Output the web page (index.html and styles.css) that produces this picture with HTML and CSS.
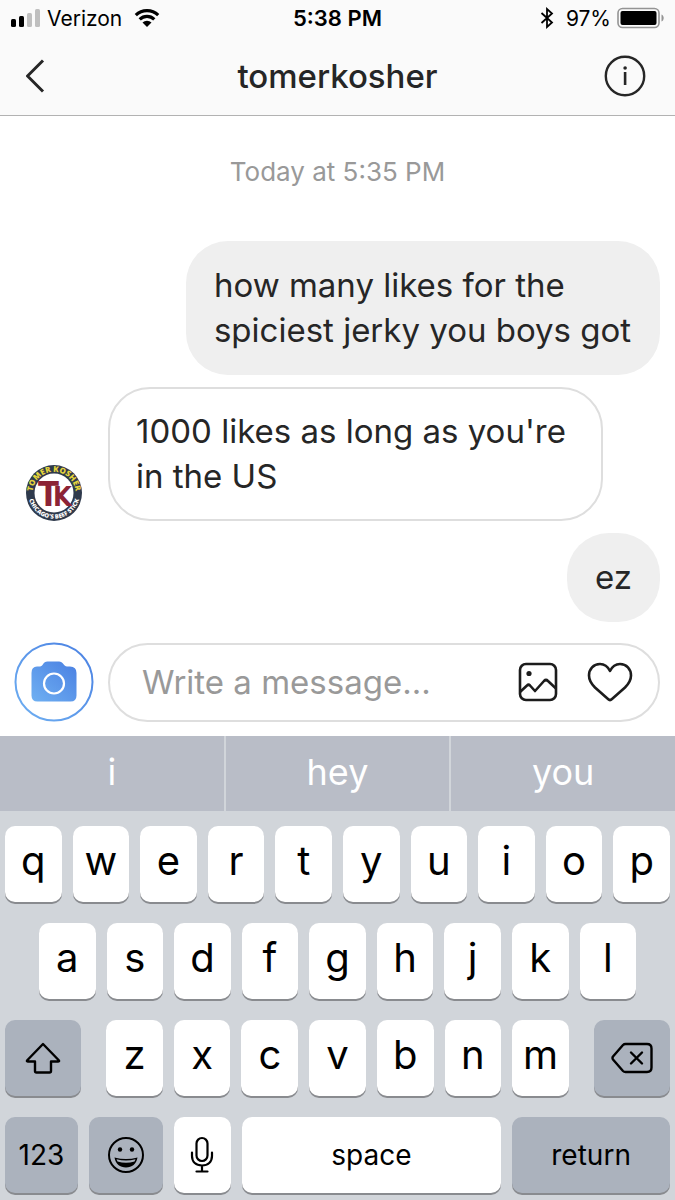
FILE: index.html
```
<!DOCTYPE html>
<html lang="en">
<head>
  <meta charset="UTF-8">
  <meta name="viewport" content="width=device-width, initial-scale=1.0">
  <title>tomerkosher</title>
  <link rel="stylesheet" href="styles.css">
</head>
<body>
  <!-- Status bar + navigation -->
  <header class="header">
    <div class="status">
      <div class="status-left">
        <svg class="signal" width="31" height="20" viewBox="0 0 31 20">
          <rect x="1" y="11" width="5" height="8" rx="1.5"/>
          <rect x="9" y="8" width="5" height="11" rx="1.5"/>
          <rect x="17" y="5" width="5" height="14" rx="1.5" fill="#bfbfbf"/>
          <rect x="25" y="1" width="5" height="18" rx="1.5" fill="#bfbfbf"/>
        </svg>
        <span>Verizon</span>
        <svg class="wifi" width="26" height="18" viewBox="0 0 26 18">
          <path d="M1.8 6.2A16 16 0 0 1 24.2 6.2M5.7 10.3A10.5 10.5 0 0 1 20.3 10.3" fill="none" stroke="#000" stroke-width="3.2"/>
          <path d="M8.5 13.6A6.5 6.5 0 0 1 17.5 13.6L13 18Z"/>
        </svg>
      </div>
      <span class="status-time">5:38 PM</span>
      <div class="status-right">
        <svg class="bluetooth" width="14" height="22" viewBox="0 0 14 22">
          <path d="M1.5 6 12 15.5 7 20V2L12 6.5 1.5 16" fill="none" stroke="#000" stroke-width="1.8"/>
        </svg>
        <span>97%</span>
        <svg width="48" height="22" viewBox="0 0 48 22">
          <rect x="1" y="1.5" width="41" height="19" rx="4.5" fill="none" stroke="#949494" stroke-width="1.6"/>
          <rect x="3.5" y="4" width="36" height="14" rx="2"/>
          <path d="M44.5 7.5C47.4 8.5 47.4 13.5 44.5 14.5Z" fill="#949494"/>
        </svg>
      </div>
    </div>
    <nav class="nav">
      <button class="icon-btn" type="button" aria-label="Back">
        <svg width="20" height="36" viewBox="0 0 20 36">
          <path d="M17 2.5 1.5 18 17 33.5" fill="none" stroke="#262626" stroke-width="3"/>
        </svg>
      </button>
      <h1 class="nav-title">tomerkosher</h1>
      <button class="icon-btn" type="button" aria-label="Info">
        <svg width="45" height="42" viewBox="0 0 45 42">
          <circle cx="21" cy="21" r="19.2" fill="none" stroke="#262626" stroke-width="2.4"/>
          <rect x="19.8" y="17" width="2.6" height="13" fill="#262626"/>
          <circle cx="21.1" cy="13" r="1.8" fill="#262626"/>
        </svg>
      </button>
    </nav>
  </header>

  <!-- Messages -->
  <main class="chat">
    <p class="timestamp">Today at 5:35 PM</p>
    <div class="bubble sent">how many likes for the spiciest jerky you boys got</div>
    <div class="received-row">
      <svg class="avatar" width="56" height="56" viewBox="0 0 56 56">
        <defs>
          <path id="arcTop" d="M6.8 32A21.5 21.5 0 1 1 49.2 32"/>
          <path id="arcBottom" d="M2.5 24A25.8 25.8 0 1 0 53.5 24"/>
        </defs>
        <circle cx="28" cy="28" r="28" fill="#2f3a4c"/>
        <circle cx="28" cy="28" r="19.5" fill="#fff"/>
        <text class="logo-ring logo-yellow" text-anchor="middle"><textPath href="#arcTop" startOffset="50%">TOMER KOSHER</textPath></text>
        <text class="logo-ring logo-white" text-anchor="middle"><textPath href="#arcBottom" startOffset="50%">CHICAGO'S BEEF STICK</textPath></text>
        <text class="logo-tk" x="12" y="41">T<tspan class="logo-k" dx="-6">K</tspan></text>
      </svg>
      <div class="bubble received">1000 likes as long as you're in the US</div>
    </div>
    <div class="bubble sent">ez</div>
  </main>

  <!-- Composer -->
  <form class="composer">
    <button class="camera-btn" type="button" aria-label="Camera">
      <svg width="80" height="80" viewBox="0 0 80 80">
        <defs>
          <linearGradient id="blue" x1="0" y1="1" x2="1" y2="0">
            <stop offset="0" stop-color="#6fb0f2"/>
            <stop offset="1" stop-color="#4a80e2"/>
          </linearGradient>
        </defs>
        <circle cx="40" cy="40" r="38.5" fill="none" stroke="url(#blue)" stroke-width="2"/>
        <path d="M23 24.5H26C29 24.5 29 19.5 33.5 19.5H45C49 19.5 50 24.5 53 24.5H56Q62.5 24.5 62.5 31V53.5Q62.5 59.5 56.5 59.5H23.5Q17.5 59.5 17.5 53.5V31Q17.5 24.5 23 24.5Z" fill="url(#blue)"/>
        <circle cx="40" cy="41.5" r="10" fill="none" stroke="#fff" stroke-width="2.2"/>
      </svg>
    </button>
    <div class="message-box">
      <input class="message-input" type="text" placeholder="Write a message..." aria-label="Message">
      <button class="icon-btn" type="button" aria-label="Photo">
        <svg width="40" height="40" viewBox="0 0 40 40" fill="none" stroke="#1c1c1c" stroke-width="2.6" stroke-linejoin="round">
          <rect x="2" y="2" width="36" height="36" rx="6"/>
          <path d="M2 30 9 23.5Q10.5 22 12 23.5L17 29 26 19Q28 17 30 19L38 26.5"/>
          <circle cx="11" cy="11.5" r="2.6" fill="#1c1c1c" stroke="none"/>
        </svg>
      </button>
      <button class="icon-btn" type="button" aria-label="Like">
        <svg width="46" height="40" viewBox="0 0 46 40" fill="none" stroke="#1c1c1c" stroke-width="2.6" stroke-linejoin="round">
          <path d="M23 9C20.5 4 17 2 13 2C6.5 2 2 7 2 13.5C2 19 4.5 22 8 25.5L21 37Q23 39 25 37L38 25.5C41.5 22 44 19 44 13.5C44 7 39.5 2 33 2C29 2 25.5 4 23 9Z"/>
        </svg>
      </button>
    </div>
  </form>

  <!-- Keyboard -->
  <section class="keyboard">
    <div class="suggestions">
      <button class="suggestion" type="button">i</button>
      <button class="suggestion" type="button">hey</button>
      <button class="suggestion" type="button">you</button>
    </div>
    <div class="keys">
      <div class="row">
        <button class="key" type="button">q</button>
        <button class="key" type="button">w</button>
        <button class="key" type="button">e</button>
        <button class="key" type="button">r</button>
        <button class="key" type="button">t</button>
        <button class="key" type="button">y</button>
        <button class="key" type="button">u</button>
        <button class="key" type="button">i</button>
        <button class="key" type="button">o</button>
        <button class="key" type="button">p</button>
      </div>
      <div class="row row-home">
        <button class="key" type="button">a</button>
        <button class="key" type="button">s</button>
        <button class="key" type="button">d</button>
        <button class="key" type="button">f</button>
        <button class="key" type="button">g</button>
        <button class="key" type="button">h</button>
        <button class="key" type="button">j</button>
        <button class="key" type="button">k</button>
        <button class="key" type="button">l</button>
      </div>
      <div class="row-shift">
        <button class="key key-dark key-icon" type="button" aria-label="Shift">
          <svg width="36" height="32" viewBox="0 0 36 32">
            <path d="M18 2 34 18.5Q34.5 19.5 33 19.5H26V29Q26 30.5 24.5 30.5H11.5Q10 30.5 10 29V19.5H3Q1.5 19.5 2 18.5Z" fill="none" stroke="#000" stroke-width="2.4" stroke-linejoin="round"/>
          </svg>
        </button>
        <div class="row">
          <button class="key" type="button">z</button>
          <button class="key" type="button">x</button>
          <button class="key" type="button">c</button>
          <button class="key" type="button">v</button>
          <button class="key" type="button">b</button>
          <button class="key" type="button">n</button>
          <button class="key" type="button">m</button>
        </div>
        <button class="key key-dark key-icon" type="button" aria-label="Delete">
          <svg width="42" height="32" viewBox="0 0 42 32" fill="none" stroke="#000" stroke-width="2.4" stroke-linejoin="round" stroke-linecap="round">
            <path d="M14.5 2H36Q40.5 2 40.5 6.5V25.5Q40.5 30 36 30H14.5Q13 30 12 29L2 17.5Q1 16 2 14.5L12 3Q13 2 14.5 2Z"/>
            <path d="M20 10.5 31 21.5M31 10.5 20 21.5"/>
          </svg>
        </button>
      </div>
      <div class="row-bottom">
        <button class="key key-dark key-word" type="button">123</button>
        <button class="key key-dark key-icon" type="button" aria-label="Emoji">
          <svg width="38" height="38" viewBox="0 0 38 38">
            <circle cx="19" cy="19" r="17" fill="none" stroke="#000" stroke-width="2"/>
            <circle cx="13" cy="13.5" r="2.2"/>
            <circle cx="25" cy="13.5" r="2.2"/>
            <path d="M7.5 21.5Q19 24.5 30.5 21.5C29.5 28 25 31.5 19 31.5C13 31.5 8.5 28 7.5 21.5Z"/>
            <path d="M9.5 23.2Q19 25.8 28.5 23.2L27.5 25.5Q19 28 10.5 25.5Z" fill="#abb2bd"/>
          </svg>
        </button>
        <button class="key key-icon" type="button" aria-label="Dictate">
          <svg width="24" height="38" viewBox="0 0 24 38" fill="none" stroke="#000" stroke-width="2.2" stroke-linecap="round">
            <rect x="6.5" y="2" width="11" height="23" rx="5.5"/>
            <path d="M2 16.5V20C2 26 6 29.5 12 29.5S22 26 22 20V16.5M12 29.5V35.5M6.5 35.5H17.5"/>
          </svg>
        </button>
        <button class="key key-word" type="button">space</button>
        <button class="key key-dark key-word" type="button">return</button>
      </div>
    </div>
  </section>
</body>
</html>
```
FILE: styles.css
```
* {
  box-sizing: border-box;
}

body {
  margin: 0;
  min-height: 100vh;
  display: flex;
  flex-direction: column;
  background-color: #fff;
  color: #262626;
  font-family: Inter, "Liberation Sans", sans-serif;
}

button {
  padding: 0;
  border: none;
  background: none;
  font-family: inherit;
  color: inherit;
}

svg {
  display: block;
}

/* Header */
.header {
  background-color: #fafafa;
  border-bottom: 1px solid #b2b2b2;
}

.status {
  display: grid;
  grid-template-columns: 1fr auto 1fr;
  align-items: center;
  height: 36px;
  padding: 0 10px;
  color: #000;
  font-size: 21px;
}

.status-left,
.status-right {
  display: flex;
  align-items: center;
  gap: 6px;
}

.status-left .wifi {
  margin-left: 6px;
}

.status-right {
  justify-content: flex-end;
}

.status-right .bluetooth {
  margin-right: 6px;
}

.status-time {
  font-size: 22px;
  font-weight: 600;
}

.nav {
  display: grid;
  grid-template-columns: 1fr auto 1fr;
  align-items: center;
  height: 79px;
  padding: 0 26px;
}

.nav .icon-btn:last-child {
  justify-self: end;
}

.nav .icon-btn:first-child {
  justify-self: start;
}

.nav-title {
  margin: 0;
  font-size: 33px;
  font-weight: 500;
}

/* Messages */
.chat {
  flex: 1;
  display: flex;
  flex-direction: column;
  gap: 12px;
  padding: 40px 15px 20px;
}

.timestamp {
  margin: 0 0 41px;
  text-align: center;
  font-size: 26px;
  line-height: 32px;
  color: #999;
}

.bubble {
  padding: 22px 28px;
  border-radius: 42px;
  font-size: 33px;
  line-height: 45px;
}

.sent {
  align-self: flex-end;
  max-width: 73.5%;
  background-color: #efefef;
}

.received-row {
  display: flex;
  align-items: flex-end;
  gap: 26px;
  padding-left: 11px;
}

.received {
  max-width: 495px;
  padding: 20px 26px;
  border: 2px solid #dedede;
}

.avatar {
  overflow: visible;
}

.logo-ring {
  font-family: "Open Sans", sans-serif;
  font-size: 8px;
  font-weight: 800;
}

.logo-yellow {
  fill: #e3d33c;
}

.logo-white {
  font-size: 6px;
  fill: #fff;
}

.logo-tk {
  font-family: "DejaVu Sans Condensed", "DejaVu Sans", sans-serif;
  font-size: 34px;
  font-weight: 700;
  fill: #8c2336;
}

.logo-k {
  font-size: 27px;
}

/* Composer */
.composer {
  display: flex;
  align-items: center;
  gap: 14px;
  padding: 0 15px 14px 14px;
}

.message-box {
  flex: 1;
  min-width: 0;
  display: flex;
  align-items: center;
  gap: 29px;
  height: 79px;
  padding: 0 25px 0 32px;
  border: 2px solid #dedede;
  border-radius: 40px;
}

.message-input {
  flex: 1;
  min-width: 0;
  padding: 0;
  border: none;
  outline: none;
  background: none;
  font-family: inherit;
  font-size: 33px;
}

.message-input::placeholder {
  color: #999;
}

/* Keyboard */
.keyboard {
  background-color: #d1d5da;
  color: #000;
}

.suggestions {
  display: grid;
  grid-template-columns: repeat(3, 1fr);
  gap: 2px;
  height: 75px;
}

.suggestion {
  padding-bottom: 4px;
  background-color: #b9bdc7;
  color: #fff;
  font-size: 36px;
}

.keys {
  display: flex;
  flex-direction: column;
  gap: 21px;
  padding: 15px 5px 7px;
}

.row {
  display: flex;
  gap: 11px;
}

.row-home {
  padding: 0 34px;
}

.row-shift {
  display: grid;
  grid-template-columns: 76fr 462fr 76fr;
  gap: 25px;
}

.row-bottom {
  display: grid;
  grid-template-columns: 73fr 74fr 57fr 260fr 158fr;
  gap: 11px;
}

.key {
  flex: 1;
  display: flex;
  align-items: center;
  justify-content: center;
  height: 76px;
  padding-bottom: 8px;
  border-radius: 10px;
  background-color: #fff;
  box-shadow: 0 2px 0 #898b8f;
  font-size: 40px;
}

.key-dark {
  background-color: #abb2bd;
}

.key-icon {
  padding-bottom: 0;
}

.key-word {
  padding-bottom: 0;
  font-size: 28px;
}
```
